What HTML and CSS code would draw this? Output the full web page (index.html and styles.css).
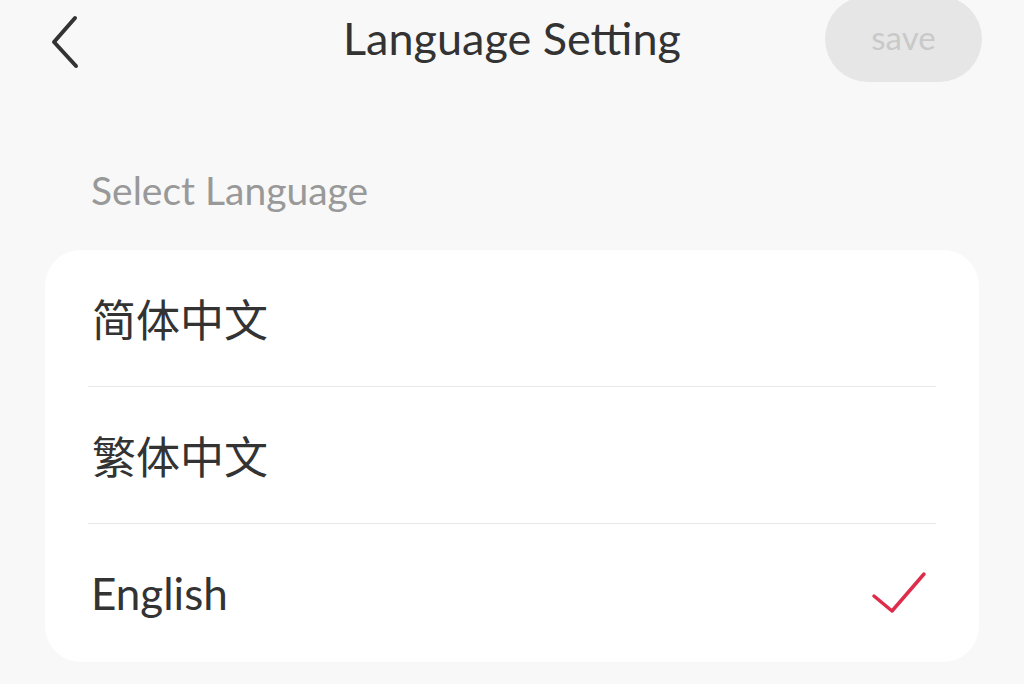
FILE: index.html
```html
<!DOCTYPE html>
<html lang="en">
<head>
<meta charset="utf-8">
<title>Language Setting</title>
<link rel="stylesheet" href="styles.css">
</head>
<body>
<header class="topbar">
  <div class="topbar-left">
    <button class="back" aria-label="Back">
      <svg width="30" height="56" viewBox="0 0 30 56"><path d="M24 4 L3 28 L25 52" fill="none" stroke="#333" stroke-width="4" stroke-linecap="round" stroke-linejoin="round"/></svg>
    </button>
  </div>
  <h1 class="title">Language Setting</h1>
  <div class="topbar-right">
    <button class="save">save</button>
  </div>
</header>
<main class="content">
  <div class="section-label">Select Language</div>
  <ul class="card">
    <li class="row"><span class="row-text cjk">简体中文</span></li>
    <li class="row"><span class="row-text cjk">繁体中文</span></li>
    <li class="row"><span class="row-text">English</span>
      <svg class="check" width="58" height="44" viewBox="0 0 58 44"><path d="M4 25 L22 40 L54 3" fill="none" stroke="#dd2d4a" stroke-width="3.5" stroke-linecap="round" stroke-linejoin="round"/></svg>
    </li>
  </ul>
</main>
</body>
</html>
```

FILE: styles.css
```css
* { box-sizing: border-box; }
html, body { margin: 0; padding: 0; }
body {
  background: #f8f8f8;
  font-family: "Lato", "Noto Sans CJK SC", sans-serif;
  color: #333;
  width: 1024px;
  height: 684px;
  overflow: hidden;
}
.topbar {
  display: grid;
  grid-template-columns: 1fr auto 1fr;
  align-items: center;
  height: 80px;
}
.topbar-left { padding-left: 51px; display: flex; align-items: center; }
.back {
  background: none;
  border: 0;
  padding: 0;
  display: flex;
  margin-top: 1px;
}
.title {
  margin: -6px 0 0;
  font-weight: 400;
  font-size: 45px;
  line-height: 52px;
  color: #333;
}
.topbar-right { display: flex; justify-content: flex-end; padding-right: 42px; align-self: start; }
.save {
  margin-top: -4px;
  width: 157px;
  height: 86px;
  border-radius: 43px;
  border: 0;
  background: #e6e6e6;
  color: #c9c9c9;
  font-family: "Lato", sans-serif;
  font-size: 33px;
  padding: 0 0 4px;
}
.content { padding: 0 45px; }
.section-label {
  margin-top: 87px;
  padding-left: 46px;
  font-size: 39px;
  line-height: 46px;
  color: #999;
}
.card {
  list-style: none;
  margin: 37px 0 0;
  padding: 0 43px;
  background: #fff;
  border-radius: 36px;
}
.row {
  height: 137px;
  display: flex;
  align-items: center;
  justify-content: space-between;
  border-bottom: 1px solid #e8e8e8;
  padding: 0 8px 0 3px;
}
.row:last-child { border-bottom: 0; height: 138px; }
.row-text { font-size: 44px; line-height: 52px; color: #333; }
.row-text.cjk { font-family: "Noto Sans CJK SC", sans-serif; font-size: 44px; padding-left: 1px; }
.check { display: block; }
```
